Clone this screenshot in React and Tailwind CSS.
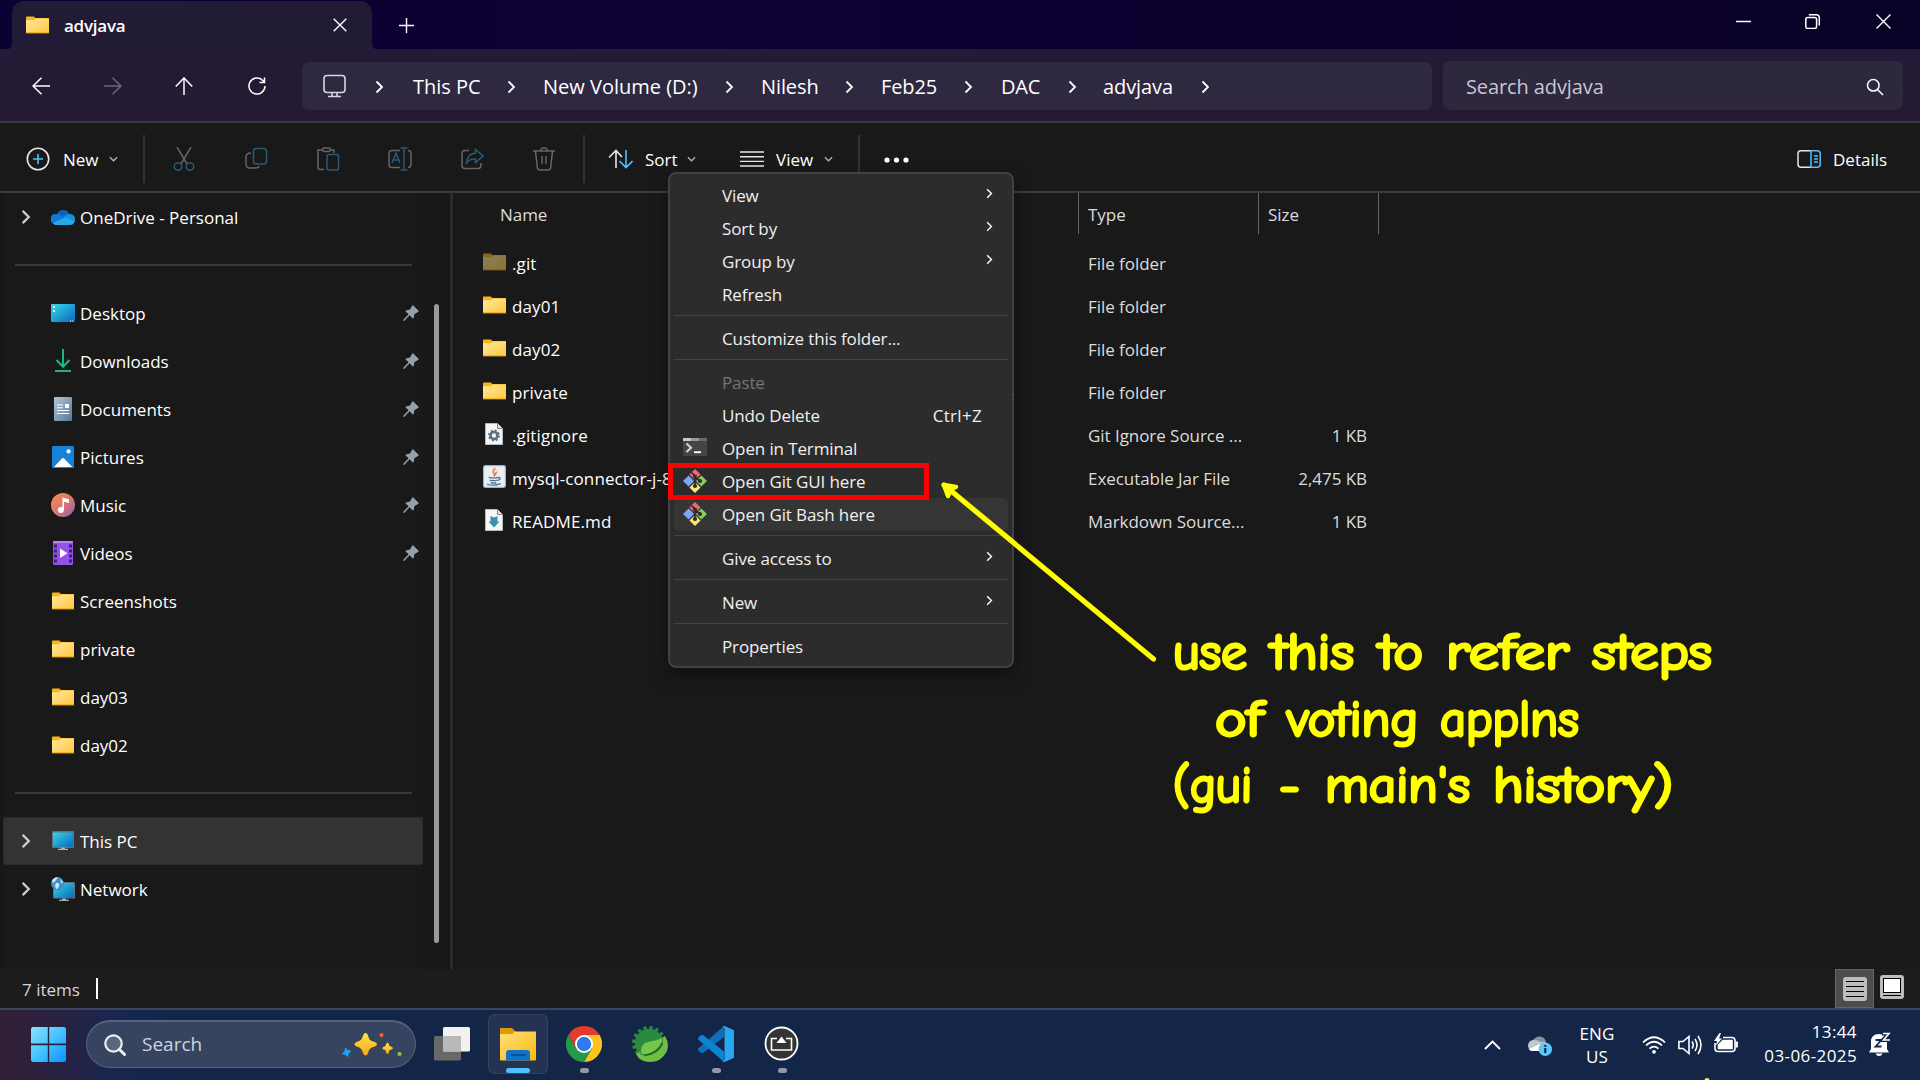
import React from "react";

/* ---------- small icons ---------- */

function Folder({ className = "w-[22px] h-[18px]", dim = false }) {
  return (
    <svg viewBox="0 0 22 18" className={className} opacity={dim ? 0.5 : 1} preserveAspectRatio="none">
      <defs>
        <linearGradient id="fold" x1="0" y1="0" x2="1" y2="1">
          <stop offset="0" stopColor="#ffe8a2" />
          <stop offset="1" stopColor="#ffc83c" />
        </linearGradient>
      </defs>
      <path d="M0 1.2Q0 .5.8.5H7.4L9 2H21.2Q22 2 22 2.8V6H0Z" fill="#f9b511" />
      <path d="M0 4.2H7.6L9.4 2.6H22V17H0Z" fill="url(#fold)" />
      <rect y="16.4" width="22" height="1" fill="#e6a417" />
    </svg>
  );
}

function Chevron({ className = "w-[9px] h-[14px]", color = "#fff", sw = 1.8 }) {
  return (
    <svg viewBox="0 0 9 14" className={className} fill="none" stroke={color} strokeWidth={sw}>
      <path d="M1.5 1.5L7 7L1.5 12.5" />
    </svg>
  );
}

function Down() {
  return (
    <svg viewBox="0 0 10 6" className="w-[9px] h-[6px]" fill="none" stroke="#b5b5b5" strokeWidth="1.4">
      <path d="M1 1L5 5L9 1" />
    </svg>
  );
}

function Pin() {
  return (
    <svg viewBox="0 0 16 16" className="w-4 h-4" fill="#98a1a8">
      <path d="M9.3.4Q9.8 0 10.3.5L15.5 5.7Q16 6.3 15.4 6.8L11.6 9L10.6 13Q10.2 13.8 9.5 13.2L6.6 10.3L1.6 15.4L0 16L.5 14.4L5.6 9.3L2.7 6.4Q2.2 5.8 3 5.4L7 4.4Z" />
    </svg>
  );
}

function OneDrive() {
  return (
    <svg viewBox="0 0 24 16" className="w-6 h-4">
      <path d="M6 5.2A6.6 6.6 0 0 1 18.3 5L14 10L5 6Z" fill="#0a64bc" />
      <path d="M5 5.2Q7.5 4.8 9.4 6L14.5 9L2 14.6A5 5 0 0 1 5 5.2Z" fill="#0f7bd8" />
      <path d="M18 5A5.3 5.3 0 0 1 23.4 13L13 8.3Q15 5 18 5Z" fill="#1490df" />
      <path d="M1.8 14.2L14 8.2L23.6 12.5Q22.6 16 19 16H5Q2.8 16 1.8 14.2Z" fill="#28a8ea" />
    </svg>
  );
}

function DesktopIcon() {
  return (
    <svg viewBox="0 0 24 18" className="w-6 h-[18px]">
      <defs>
        <linearGradient id="dsk" x1="0" y1="0" x2="1" y2="1">
          <stop offset="0" stopColor="#35d9e8" />
          <stop offset="1" stopColor="#0c66c0" />
        </linearGradient>
      </defs>
      <rect width="24" height="18" rx="1" fill="url(#dsk)" />
      <path d="M2 2h2v2h-2zM2 6h2v2h-2z" fill="#fff" />
      <path d="M19 16.6h1v1h-1zM21 16.6h1v1h-1z" fill="#fff" />
    </svg>
  );
}

function DownloadsIcon() {
  return (
    <svg viewBox="0 0 16 23" className="w-4 h-[23px]" fill="none" stroke="#1fb58c" strokeWidth="2">
      <path d="M8 0V17.5M1.5 11L8 17.8L14.5 11M0 22H16" />
    </svg>
  );
}

function DocumentsIcon() {
  return (
    <svg viewBox="0 0 18 24" className="w-[18px] h-6">
      <defs>
        <linearGradient id="doc" x1="0" y1="0" x2="1" y2="1">
          <stop offset="0" stopColor="#b4c6d8" />
          <stop offset="1" stopColor="#56789a" />
        </linearGradient>
      </defs>
      <rect width="18" height="24" rx="1" fill="url(#doc)" />
      <path d="M3 8h6M3 10.8h6M3 13.5h12M3 16.5h12" stroke="#fff" strokeWidth="1.1" />
      <rect x="11" y="7" width="4" height="4" fill="#fff" />
    </svg>
  );
}

function PicturesIcon() {
  return (
    <svg viewBox="0 0 22 22" className="w-[22px] h-[22px]">
      <rect width="22" height="22" rx="1.2" fill="#1683d8" />
      <path d="M2 21L9.6 12.8Q11 11.4 12.4 12.8L20.2 21Z" fill="#fff" />
      <circle cx="16.6" cy="5.4" r="2.1" fill="#fff" />
    </svg>
  );
}

function MusicIcon() {
  return (
    <svg viewBox="0 0 24 24" className="w-6 h-6">
      <defs>
        <linearGradient id="mus" x1="0" y1="0" x2="1" y2="1">
          <stop offset="0.15" stopColor="#f28a50" />
          <stop offset="0.6" stopColor="#d2707c" />
          <stop offset="1" stopColor="#8a5fb8" />
        </linearGradient>
      </defs>
      <circle cx="12" cy="12" r="12" fill="url(#mus)" />
      <circle cx="9.8" cy="17" r="3" fill="#fff" />
      <path d="M11.4 4.6L18 6.4V10L13 8.8V17H11.4Z" fill="#fff" />
    </svg>
  );
}

function VideosIcon() {
  return (
    <svg viewBox="0 0 20 24" className="w-5 h-6">
      <rect width="20" height="24" rx="1.2" fill="#9550e6" />
      <rect width="20" height="2" rx="1" fill="#b884f5" />
      <path d="M1 3.5h3v3h-3zM1 8.5h3v3h-3zM1 13.5h3v3h-3zM1 18.5h3v3h-3zM16 3.5h3v3h-3zM16 8.5h3v3h-3zM16 13.5h3v3h-3zM16 18.5h3v3h-3z" fill="#3f2072" />
      <path d="M7 7.5V17L14.5 12.3Z" fill="#fff" />
    </svg>
  );
}

function ThisPcIcon() {
  return (
    <svg viewBox="0 0 22 19" className="w-[22px] h-[19px]">
      <defs>
        <linearGradient id="tpc" x1="0" y1="0" x2="1" y2="1">
          <stop offset="0" stopColor="#35d9e8" />
          <stop offset="1" stopColor="#0c66c0" />
        </linearGradient>
      </defs>
      <rect width="22" height="17" rx="1" fill="#5b7482" />
      <rect x="1" y="1.5" width="20" height="14.3" fill="url(#tpc)" />
      <path d="M9 16.5h4v1.3h3V19H6V17.8h3Z" fill="#a8b2ba" />
    </svg>
  );
}

function NetworkIcon() {
  return (
    <svg viewBox="0 0 24 24" className="w-6 h-6">
      <defs>
        <linearGradient id="net" x1="0" y1="0" x2="1" y2="1">
          <stop offset="0" stopColor="#35d9e8" />
          <stop offset="1" stopColor="#0c66c0" />
        </linearGradient>
      </defs>
      <rect x="2" y="5" width="22" height="16.5" rx="1" fill="#5b7482" />
      <rect x="3" y="6" width="20" height="14.5" fill="url(#net)" />
      <path d="M11 21.5h4v1.3h3V24H8V22.8h3Z" fill="#a8b2ba" />
      <circle cx="6.5" cy="6.5" r="6.5" fill="#3f8fc4" />
      <path d="M1 4Q3 0 7 .4Q5 3 3.500 5Q2 7 1 4ZM5 6Q8 5 8.500 8Q7 12 5.500 12Q3 9 5 6ZM9 2L12 5L10.500 7Z" fill="#cfe8f5" />
    </svg>
  );
}

function PageIcon({ kind }) {
  return (
    <svg viewBox="0 0 18 22" className="w-[18px] h-[22px] ml-[2px]">
      <path d="M.5.5H12.500L17.500 5.500V21.500H.5Z" fill="#f6f6f6" stroke="#b9b9b9" />
      <path d="M12.500.5V5.500H17.500" fill="#dcdcdc" stroke="#8c8c8c" />
      {kind === "gear" ? (
        <>
          <circle cx="9" cy="12.500" r="3.500" fill="none" stroke="#5f717e" strokeWidth="2.600" />
          <circle cx="9" cy="12.500" r="5.200" fill="none" stroke="#5f717e" strokeWidth="1.600" strokeDasharray="2 2.080" />
        </>
      ) : (
        <path d="M5.500 7L9 8.500L12.500 7V12.500H14.500L9 18.500L3.500 12.500H5.500Z" fill="#3c8fae" />
      )}
    </svg>
  );
}

function JarIcon() {
  return (
    <svg viewBox="0 0 24 24" className="w-[23px] h-[23px]">
      <rect x=".6" y=".6" width="22.800" height="22.800" rx="2" fill="#e9eef2" stroke="#9fb3c2" strokeWidth="1.200" />
      <path d="M13 3.500Q9 6.500 11.500 9Q12.500 10.500 11.500 12M14.500 7Q12.500 8.500 13.500 10.500" stroke="#e8782c" strokeWidth="1.500" fill="none" />
      <path d="M6 13Q11 14.500 16 13M7 15.800Q11 17 15 15.800M8 18.300Q11 19.300 14 18.300M16 13Q19 13 17.500 15L15.500 16.300M4 19.800Q11 22.500 18.500 19.500" stroke="#4a7493" strokeWidth="1.300" fill="none" />
    </svg>
  );
}

function GitIcon() {
  return (
    <svg viewBox="0 0 24 24" className="w-6 h-6">
      <path d="M12 0L17.600 5.600L12 11L6.400 5.600Z" fill="#f0696c" />
      <path d="M18.400 6.400L24 12L18.400 17.600L13 12Z" fill="#84cf5e" />
      <path d="M12 13L17.600 18.400L12 24L6.400 18.400Z" fill="#fbe27b" />
      <path d="M5.600 6.400L11 12L5.600 17.600L0 12Z" fill="#79a9f5" />
      <path d="M8.500 3.500L12 7V17M12 8L17 12" stroke="#2c2c2c" strokeWidth="1.700" fill="none" />
      <circle cx="12" cy="7.500" r="2" fill="#2c2c2c" />
      <circle cx="17" cy="12" r="2.100" fill="#2c2c2c" />
      <circle cx="12" cy="17" r="2.100" fill="#2c2c2c" />
    </svg>
  );
}

function TerminalIcon() {
  return (
    <svg viewBox="0 0 24 18" className="w-6 h-[18px] mb-0.5">
      <rect width="24" height="18" rx="1" fill="#454545" />
      <path d="M0 0h8v3h-8z" fill="#c8c8c8" />
      <path d="M8 0h8v3h-8z" fill="#9a9a9a" />
      <path d="M16 0h8v3h-8z" fill="#6a6a6a" />
      <path d="M3.500 5.500L8 9.700L3.500 14" stroke="#d0d0d0" strokeWidth="2.200" fill="none" />
      <path d="M11 14.200H18" stroke="#fff" strokeWidth="1.800" />
    </svg>
  );
}

/* ---------- title and navigation ---------- */

function TitleBar() {
  return (
    <div className="flex h-[49px] shrink-0 items-end bg-linear-to-r from-[#0c0133] via-[#0e0032] to-[#0a0226]">
      <svg viewBox="0 0 12 12" className="h-[5px] w-[5px] ml-[7px] text-[#221b36]">
        <path d="M12 0V12H0Q12 12 12 0Z" fill="currentColor" />
      </svg>
      <div className="flex h-12 w-[360px] items-center rounded-t-[12px] bg-[#221b36] pl-[14px] pr-[25px]">
        <Folder className="w-[23px] h-[18px]" />
        <span className="ml-[15px] pt-px text-[17px] font-semibold tracking-[-0.25px] text-white">advjava</span>
        <svg viewBox="0 0 14 14" className="ml-auto mb-px h-[14px] w-[14px]" stroke="#fff" strokeWidth="1.400">
          <path d="M.7.7L13.300 13.300M13.300.7L.7 13.300" />
        </svg>
      </div>
      <svg viewBox="0 0 12 12" className="h-[5px] w-[5px] text-[#221b36]">
        <path d="M0 0V12H12Q0 12 0 0Z" fill="currentColor" />
      </svg>
      <svg viewBox="0 0 15 15" className="mb-[16px] ml-[22px] h-[15px] w-[15px]" stroke="#fff" strokeWidth="1.400">
        <path d="M7.500 0V15M0 7.500H15" />
      </svg>
      <div className="mb-[20px] ml-auto mr-[29px] flex items-center gap-[55px]">
        <svg viewBox="0 0 15 15" className="h-[15px] w-[15px]" stroke="#fff" strokeWidth="1.500">
          <path d="M0 7.500H15" />
        </svg>
        <svg viewBox="0 0 15 15" className="mr-px -ml-px h-[15px] w-[15px]" fill="none" stroke="#fff" strokeWidth="1.500">
          <rect x=".8" y="3.600" width="10.800" height="10.800" rx="2" />
          <path d="M3.800.8H11Q14.300.8 14.300 4V11.500" />
        </svg>
        <svg viewBox="0 0 15 15" className="h-[15px] w-[15px]" stroke="#fff" strokeWidth="1.400">
          <path d="M.5.5L14.500 14.500M14.500.5L.5 14.500" />
        </svg>
      </div>
    </div>
  );
}

function Crumb({ children, className }) {
  return (
    <>
      <Chevron className="h-[14px] w-[9px] shrink-0 mt-0.5" />
      <span className={"shrink-0 whitespace-nowrap pt-0.5 " + className}>{children}</span>
    </>
  );
}

function NavBar() {
  return (
    <div className="flex h-[74px] shrink-0 items-start border-b-2 border-[#3b3b3d] bg-linear-to-b from-[#221b36] to-[#241a32] pr-[17px]">
      <div className="flex w-[302px] items-center gap-[54px] pl-[32px] pt-[28px]">
        <svg viewBox="0 0 18 18" className="h-[18px] w-[18px]" fill="none" stroke="#fff" strokeWidth="1.500">
          <path d="M18 9H1M9.500.7L1 9L9.500 17.300" />
        </svg>
        <svg viewBox="0 0 18 18" className="h-[18px] w-[18px]" fill="none" stroke="#6d6779" strokeWidth="1.500">
          <path d="M0 9H17M8.500.7L17 9L8.500 17.300" />
        </svg>
        <svg viewBox="0 0 18 18" className="-ml-px mr-px h-[18px] w-[18px]" fill="none" stroke="#fff" strokeWidth="1.500">
          <path d="M9 18V1M.7 9.500L9 1L17.300 9.500" />
        </svg>
        <svg viewBox="0 0 18 18" className="h-[18px] w-[18px]" fill="none" stroke="#fff" strokeWidth="1.500">
          <path d="M17 9A8 8 0 1 1 14.500 3.200L16.500 5.200M16.500.5V5.500H11.500" />
        </svg>
      </div>
      <div className="mt-[13px] flex h-12 w-[1130px] items-center rounded-[7px] bg-[#2e2841] pl-[21px] text-[20px] text-white">
        <svg viewBox="0 0 23 24" className="mr-[29px] h-[24px] w-[23px] shrink-0" fill="none" stroke="#d8d6de" strokeWidth="1.600">
          <rect x="1" y="1.500" width="21" height="17" rx="3" />
          <path d="M9 18.500V22M14 18.500V22M5 22.500H18" />
        </svg>
        <Crumb className="ml-[29px] mr-[27px] w-[67px] tracking-[0px]">This PC</Crumb>
        <Crumb className="ml-[27px] mr-[26px] w-[156px] tracking-[0px]">New Volume (D:)</Crumb>
        <Crumb className="ml-[27px] mr-[27px] w-[57px] tracking-[-0.1px]">Nilesh</Crumb>
        <Crumb className="ml-[27px] mr-[27px] w-[56px] tracking-[-0.1px]">Feb25</Crumb>
        <Crumb className="ml-[28px] mr-[26px] w-[41px] tracking-[-0.2px]">DAC</Crumb>
        <Crumb className="ml-[26px] mr-[28px] w-[70px] tracking-[-0.1px]">advjava</Crumb>
        <Chevron className="h-[14px] w-[9px] mt-0.5" />
      </div>
      <div className="ml-[11px] mt-[12px] flex h-[49px] flex-1 items-center justify-between rounded-[7px] bg-[#2e283f] pl-[23px] pr-[19px]">
        <span className="pt-0.5 text-[20px] tracking-[-0.1px] text-[#c9c6cf]">Search advjava</span>
        <svg viewBox="0 0 18 18" className="mt-0.5 h-[18px] w-[18px]" fill="none" stroke="#fff" strokeWidth="1.500">
          <circle cx="7.300" cy="7.300" r="5.800" />
          <path d="M11.500 11.500L17 17" />
        </svg>
      </div>
    </div>
  );
}

/* ---------- command bar ---------- */

function CommandBar() {
  const g = "#666";
  const b = "#2b5a75";
  return (
    <div className="flex h-[70px] shrink-0 items-center border-b-2 border-[#3b3b3b] bg-[#191919] pt-1 text-[17px] text-white">
      <div className="flex w-[143px] items-center pl-[26px]">
        <svg viewBox="0 0 24 24" className="h-6 w-6 mb-px" fill="none" stroke="#e6e6e6" strokeWidth="1.600">
          <circle cx="12" cy="12" r="10.700" />
          <path d="M12 7V17M7 12H17" stroke="#4cc2ff" />
        </svg>
        <span className="ml-[13px] mr-[9px] w-[37px] pt-px">New</span>
        <Down />
      </div>
      <div className="h-12 w-[2px] bg-[#333]" />
      <div className="flex w-[438px] items-center gap-12 pl-[27px]">
        <svg viewBox="0 0 24 24" className="h-6 w-6 shrink-0" fill="none" strokeWidth="1.500">
          <path d="M5 0L15 17M19 0L9 17" stroke={g} />
          <circle cx="6" cy="19.500" r="3.800" stroke={b} />
          <circle cx="18" cy="19.500" r="3.800" stroke={b} />
        </svg>
        <svg viewBox="0 0 24 24" className="h-6 w-6 shrink-0" fill="none" strokeWidth="1.500">
          <path d="M7 6Q2 6 2 10V17Q2 21 6 21H11Q15 21 15 19" stroke={g} />
          <rect x="9.500" y="1.500" width="13" height="15.500" rx="3" stroke={b} />
        </svg>
        <svg viewBox="0 0 24 24" className="h-6 w-6 shrink-0" fill="none" strokeWidth="1.500">
          <path d="M7 3H2V20Q2 22.500 4.500 22.500H8M14 3H18V6" stroke={g} />
          <rect x="6.500" y="1" width="8" height="3.500" rx="1.700" stroke={g} />
          <rect x="11" y="7.500" width="11.500" height="15.500" rx="2" stroke={b} />
        </svg>
        <svg viewBox="0 0 24 24" className="h-6 w-6 shrink-0" fill="none" strokeWidth="1.500">
          <path d="M12 3.500H4Q1 3.500 1 6.500V17.500Q1 20.500 4 20.500H12M20 3.500Q23 3.500 23 6.500V17.500Q23 20.500 20 20.500" stroke={g} />
          <path d="M16 1V23M12.500 1H19.500M12.500 23H19.500M4 16L8 6L12 16M5.500 13H10.500" stroke={b} />
        </svg>
        <svg viewBox="0 0 24 24" className="h-6 w-6 shrink-0" fill="none" strokeWidth="1.500">
          <path d="M9 3.500H5Q2 3.500 2 6.500V18.500Q2 21.500 5 21.500H18Q21 21.500 21 18V16" stroke={g} />
          <path d="M15.500 2.500L23 9L15.500 15.500V12Q10 11.500 6.500 16Q7 7 15.500 6Z" stroke={b} />
        </svg>
        <svg viewBox="0 0 24 24" className="h-6 w-6 shrink-0" fill="none" stroke={g} strokeWidth="1.500">
          <path d="M1 4H23M8.500 4Q8.500 1 12 1Q15.500 1 15.500 4M3.500 4L5.300 20.500Q5.500 23 8 23H16Q18.500 23 18.700 20.500L20.500 4M10 9V17M14 9V17" />
        </svg>
      </div>
      <div className="h-12 w-[2px] bg-[#333]" />
      <div className="flex w-[273px] items-center pl-[23px]">
        <svg viewBox="0 0 25 20" className="h-[20px] w-[25px]" fill="none" strokeWidth="1.600">
          <path d="M8 19V1.500M1 8.500L8 1.500L14 8" stroke="#e6e6e6" />
          <path d="M18 1V18.500M11.500 12L18 18.500L24.500 12" stroke="#4cc2ff" />
        </svg>
        <span className="ml-[12px] mr-[8px] w-[34px] pt-px">Sort</span>
        <Down />
        <svg viewBox="0 0 24 16" className="ml-[44px] mb-px h-[16px] w-6" stroke="#e6e6e6" strokeWidth="1.400">
          <path d="M0 1H24M0 5.700H24M0 10.400H24M0 15H24" />
        </svg>
        <span className="ml-[12px] mr-[9px] w-[39px] pt-px">View</span>
        <Down />
      </div>
      <div className="h-12 w-[2px] bg-[#333]" />
      <svg viewBox="0 0 25 6" className="ml-[24px] mt-0.5 h-[6px] w-[25px]" fill="#fff">
        <circle cx="3" cy="3" r="2.600" />
        <circle cx="12.500" cy="3" r="2.600" />
        <circle cx="22" cy="3" r="2.600" />
      </svg>
      <div className="ml-auto flex items-center pr-[32px]">
        <svg viewBox="0 0 24 18" className="h-[18px] w-6" fill="none" strokeWidth="1.500">
          <path d="M14 .8H4Q1 .8 1 3.800V14.200Q1 17.200 4 17.200H14" stroke="#e6e6e6" />
          <path d="M14 .8H20Q23.200.8 23.200 3.800V14.200Q23.200 17.200 20 17.200H14ZM17 6H21M17 9H21M17 12H21" stroke="#4cc2ff" />
        </svg>
        <span className="ml-[12px] w-[55px] pt-px">Details</span>
      </div>
    </div>
  );
}

/* ---------- sidebar ---------- */

const QUICK = [
  ["Desktop", <DesktopIcon />, true],
  ["Downloads", <DownloadsIcon />, true],
  ["Documents", <DocumentsIcon />, true],
  ["Pictures", <PicturesIcon />, true],
  ["Music", <MusicIcon />, true],
  ["Videos", <VideosIcon />, true],
  ["Screenshots", <Folder />, false],
  ["private", <Folder />, false],
  ["day03", <Folder />, false],
  ["day02", <Folder />, false],
];

function SideRow({ label, icon, pin, expand, active }) {
  return (
    <div className={"flex h-12 items-center pl-[18px] pr-1 " + (active ? "rounded-[3px] bg-[#333] shadow-[inset_0_0_0_1px_#2b2b2b]" : "")}>
      <div className="w-[30px]">{expand && <Chevron className="h-[16px] w-[10px]" color="#cfcfcf" sw={2} />}</div>
      <div className="mb-px flex w-6 justify-center">{icon}</div>
      <span className="ml-[5px] pt-px text-[17px] text-white">{label}</span>
      {pin && <div className="ml-auto"><Pin /></div>}
    </div>
  );
}

function Sidebar() {
  return (
    <div className="flex w-[450px] bg-[#171717]">
      <div className="ml-[3px] w-[420px] bg-[#191919]">
        <SideRow label="OneDrive - Personal" icon={<OneDrive />} expand />
        <div className="ml-3 mr-[11px] mt-[23px] h-[2px] bg-[#393939]" />
        <div className="mt-[23px]">
          {QUICK.map(([label, icon, pin]) => (
            <SideRow key={label} label={label} icon={icon} pin={pin} />
          ))}
        </div>
        <div className="ml-3 mr-[11px] mt-[23px] h-[2px] bg-[#393939]" />
        <div className="mt-[23px]">
          <SideRow label="This PC" icon={<ThisPcIcon />} expand active />
          <SideRow label="Network" icon={<NetworkIcon />} expand />
        </div>
      </div>
      <div className="ml-[11px] mt-[111px] h-[639px] w-[5px] rounded-full bg-[#999]" />
    </div>
  );
}

/* ---------- file list ---------- */

const FILES = [
  [".git", <Folder className="w-[23px] h-[18px]" dim />, "File folder", ""],
  ["day01", <Folder className="w-[23px] h-[18px]" />, "File folder", ""],
  ["day02", <Folder className="w-[23px] h-[18px]" />, "File folder", ""],
  ["private", <Folder className="w-[23px] h-[18px]" />, "File folder", ""],
  [".gitignore", <PageIcon kind="gear" />, "Git Ignore Source ...", "1 KB"],
  ["mysql-connector-j-8", <JarIcon />, "Executable Jar File", "2,475 KB"],
  ["README.md", <PageIcon kind="down" />, "Markdown Source...", "1 KB"],
];

function FileList() {
  return (
    <div className="flex-1 border-l-[3px] border-[#2b2b2b] bg-[#191919] text-[17px] tracking-[-0.05px] text-[#dcdcdc]">
      <div className="mb-[8px] flex h-[41px] items-center">
        <span className="w-[625px] pl-[47px] pt-0.5">Name</span>
        <div className="flex h-full w-[180px] items-center border-l border-[#666] pl-[9px] pt-0.5">Type</div>
        <div className="flex h-full w-[121px] items-center border-x border-[#666] pl-[9px] pt-0.5">Size</div>
      </div>
      {FILES.map(([name, icon, type, size]) => (
        <div key={name} className="flex h-[43px] items-center">
          <div className="mb-1 ml-[30px] w-[29px]">{icon}</div>
          <span className="w-[576px] tracking-[0.12px] text-white">{name}</span>
          <span className="w-[170px]">{type}</span>
          <span className="w-[109px] text-right">{size}</span>
        </div>
      ))}
    </div>
  );
}

/* ---------- context menu ---------- */

function MenuItem({ label, icon, arrow, hint, muted, hover }) {
  return (
    <div className={"flex h-[33px] items-center rounded-[5px] pl-[9px] pr-[15px] " + (hover ? "bg-[#353535] " : "") + (muted ? "text-[#757575]" : "text-[#f0f0f0]")}>
      <div className="mb-0.5 w-[39px]">{icon}</div>
      <span className="pt-px">{label}</span>
      {hint && <span className="ml-auto mr-[11px] pt-px tracking-[0.3px]">{hint}</span>}
      {arrow && <Chevron className="mb-1 ml-auto h-[11px] w-[7px]" />}
    </div>
  );
}

function MenuLine() {
  return <div className="mb-[6px] mt-[4px] h-px bg-[#434343]" />;
}

function ContextMenu() {
  return (
    <div className="absolute left-[668px] top-[172px] h-[496px] w-[346px] rounded-[8px] border-2 border-[#414141] bg-[#2c2c2c] px-1 pt-[5px] text-[17px] tracking-[-0.12px] shadow-[0_8px_16px_rgba(0,0,0,0.35)]">
      <MenuItem label="View" arrow />
      <MenuItem label="Sort by" arrow />
      <MenuItem label="Group by" arrow />
      <MenuItem label="Refresh" />
      <MenuLine />
      <MenuItem label="Customize this folder..." />
      <MenuLine />
      <MenuItem label="Paste" muted />
      <MenuItem label="Undo Delete" hint="Ctrl+Z" />
      <MenuItem label="Open in Terminal" icon={<TerminalIcon />} />
      <MenuItem label="Open Git GUI here" icon={<GitIcon />} />
      <MenuItem label="Open Git Bash here" icon={<GitIcon />} hover />
      <MenuLine />
      <MenuItem label="Give access to" arrow />
      <MenuLine />
      <MenuItem label="New" arrow />
      <MenuLine />
      <MenuItem label="Properties" />
    </div>
  );
}

/* ---------- annotation drawn over the screen ---------- */

const NOTES = [
  ["use", 1173, 670, 74],
  ["this", 1271, 670, 83],
  ["to", 1379, 670, 44],
  ["refer", 1446, 670, 123],
  ["steps", 1592, 670, 120],
  ["of", 1215, 737, 48],
  ["voting", 1287, 737, 131],
  ["applns", 1440, 737, 139],
  ["(gui", 1173, 803, 79],
  ["-", 1279, 803, 21],
  ["main's", 1325, 803, 145],
  ["history)", 1493, 803, 180],
];

function Annotation() {
  return (
    <>
      <div className="absolute left-[668px] top-[463px] h-[37px] w-[261px] border-[5px] border-[#ff0000]" />
      <svg viewBox="0 0 1920 1080" className="pointer-events-none absolute left-0 top-0 h-[1080px] w-[1920px]">
        <g stroke="#ffff00" strokeLinecap="round" strokeLinejoin="round" fill="#ffff00">
          <path d="M1153.500 659L944 485" strokeWidth="5.200" />
          <path d="M944 485L956 487L951 489L948 496Z" strokeWidth="4.500" />
          <g fontFamily="'Comic Sans MS', 'Comic Neue', Lato, sans-serif" fontSize="51" strokeWidth="2.900" className="[font-variant-ligatures:none]">
            {NOTES.map(([t, x, y, w]) => (
              <text key={t} x={x} y={y - 1} textLength={w} lengthAdjust="spacingAndGlyphs">{t}</text>
            ))}
          </g>
        </g>
        <circle cx="1707" cy="1080.500" r="2.500" fill="#ffff00" />
        <path d="M1013 394h1v2h-1z" fill="#c0392b" />
        <path d="M1013 477h1v4h-1z" fill="#a01818" />
      </svg>
    </>
  );
}

/* ---------- status bar and taskbar ---------- */

function StatusBar() {
  return (
    <div className="flex h-[39px] shrink-0 items-center bg-[#1c1c1c] pl-[22px] pr-[16px]">
      <span className="w-[74px] pt-0.5 text-[17px] text-[#d6d6d6]">7 items</span>
      <div className="h-[21px] w-[2px] bg-white" />
      <div className="ml-auto flex h-[39px] w-[39px] items-center justify-center border border-[#666] bg-[#4d4d4d]">
        <svg viewBox="0 0 24 24" className="h-6 w-6">
          <rect width="24" height="24" rx="3" fill="#bdbbbd" />
          <path d="M3 4.500H21M3 9.500H21M3 14.500H21M3 19.500H21" stroke="#000" />
        </svg>
      </div>
      <svg viewBox="0 0 24 24" className="mb-1 ml-[6px] h-6 w-6">
        <rect width="24" height="24" rx="3" fill="#bdbbbd" />
        <rect x="3.500" y="3.500" width="17" height="14" fill="#fff" stroke="#000" />
        <path d="M3 20.500H21" stroke="#000" />
      </svg>
    </div>
  );
}

function TaskApp({ children, active, mark }) {
  return (
    <div className={"flex h-[60px] w-[60px] flex-col items-center rounded-[7px] pt-[12px] " + (active ? "bg-[#243352] shadow-[inset_0_0_0_1px_#34425f]" : "")}>
      <div className="h-9 w-9">{children}</div>
      {mark && <div className={"mt-[6px] h-[5px] rounded-full " + (active ? "w-6 bg-[#4cc2ff]" : "w-[9px] bg-[#9398a8]")} />}
    </div>
  );
}

function Taskbar() {
  return (
    <div className="flex h-[72px] shrink-0 items-start border-t-2 border-[#3b465e] bg-[linear-gradient(90deg,#331f36_0px,#2a2140_50px,#162750_125px,#142648_170px,#142648_100%)] text-white">
      <svg viewBox="0 0 35 35" className="ml-[31px] mt-[17px] h-[35px] w-[35px]">
        <defs>
          <linearGradient id="win" x1="0" y1="0" x2="35" y2="35" gradientUnits="userSpaceOnUse">
            <stop offset="0" stopColor="#8fe0ff" />
            <stop offset="0.500" stopColor="#45c3ff" />
            <stop offset="1" stopColor="#0a93ff" />
          </linearGradient>
        </defs>
        <path d="M1.500 0H16.800V16.600H0V1.500ZM18.200 0H33.500L35 1.500V16.600H18.200ZM0 18.200H16.800V35H1.500L0 33.500ZM18.200 18.200H35V33.500L33.500 35H18.200Z" fill="url(#win)" />
      </svg>
      <div className="ml-5 mt-[10px] flex h-12 w-[330px] items-center rounded-full border border-t-2 border-[#55607c] bg-[#37445f] pl-[17px] pr-[13px]">
        <svg viewBox="0 0 22 22" className="h-[22px] w-[22px]" fill="#5a6580" stroke="#eceef2" strokeWidth="2.200">
          <circle cx="9.500" cy="9.500" r="8.200" />
          <path d="M15.300 15.300L20.500 20.500" strokeWidth="3" strokeLinecap="round" />
        </svg>
        <span className="ml-[16px] text-[19px] text-[#cfd3dc]">Search</span>
        <svg viewBox="0 0 60 24" className="ml-auto h-6 w-[60px]">
          <defs>
            <linearGradient id="spk" x1="0" y1="0" x2="0" y2="1">
              <stop offset="0" stopColor="#ffe24a" />
              <stop offset="1" stopColor="#f9a61c" />
            </linearGradient>
          </defs>
          <path d="M23.500 0Q25.500 0 26.500 4Q27.300 7.500 31 8.500Q35 9.500 35 11.200Q35 13 31 14Q27.500 15 26.500 18.500Q25.500 22.500 23.500 22.500Q21.700 22.500 20.500 18.500Q19.500 15 16 14Q12.500 13 12.500 11.200Q12.500 9.500 16 8.500Q19.500 7.500 20.500 4Q21.700 0 23.500 0Z" fill="url(#spk)" />
          <path d="M45.500 9.500Q46.700 9.500 47.500 13Q51 14 51 15.200Q51 16.300 47.500 17.200Q46.700 21 45.500 21Q44.300 21 43.500 17.200Q40.200 16.300 40.200 15.200Q40.200 14 43.500 13Q44.300 9.500 45.500 9.500Z" fill="url(#spk)" />
          <path d="M3.500 15L5.500 17.500L8.500 18L6.500 20.500L5.500 23.500L3.500 21.500L.5 20.500L3 18.500Z" fill="#18a6ee" stroke="#18a6ee" />
          <circle cx="39.500" cy="2.100" r="2.100" fill="#f0622d" />
          <circle cx="57.500" cy="21" r="2.100" fill="#8cc63e" />
        </svg>
      </div>
      <div className="ml-[6px] mt-1 flex gap-[6px]">
        <TaskApp>
          <svg viewBox="0 0 36 36" className="h-9 w-9">
            <rect y="10" width="27" height="24.500" rx="1.500" fill="#686868" />
            <rect x="9" y="1" width="27" height="24.500" rx="1.500" fill="#f2f2f2" />
            <path d="M9 10H27V25.500H9Z" fill="#b9b9b9" />
          </svg>
        </TaskApp>
        <TaskApp active mark>
          <svg viewBox="0 0 36 36" className="h-9 w-9">
            <defs>
              <linearGradient id="bigf" x1="0" y1="0" x2="1" y2="1">
                <stop offset="0" stopColor="#ffdf7c" />
                <stop offset="1" stopColor="#fdb90d" />
              </linearGradient>
            </defs>
            <path d="M0 3Q0 2 1 2H12L15.500 5.500V10H0Z" fill="#dc9a05" />
            <path d="M0 8H12L15 5.500H36V33.500Q36 34.500 35 34.500H1Q0 34.500 0 33.500Z" fill="url(#bigf)" />
            <path d="M6 34.500V27Q6 24 9 24H27Q30 24 30 27V34.500Z" fill="#0d74c8" />
            <path d="M10.500 29H25.500" stroke="#0a4d90" strokeWidth="1.800" />
          </svg>
        </TaskApp>
        <TaskApp mark>
          <svg viewBox="0 0 36 36" className="h-9 w-9">
            <path d="M18 18L2.400 9A18 18 0 0 1 33.600 9Z" fill="#e33b2e" />
            <path d="M18 9H33.600A18 18 0 0 1 18 36L25.800 22.500Z" fill="#fcc31e" />
            <path d="M2.400 9A18 18 0 0 0 18 36L25.800 22.500L10.200 22.500Z" fill="#249a48" />
            <path d="M2.400 9H33.600H18L10.200 22.500Z" fill="#e33b2e" />
            <circle cx="18" cy="18" r="9" fill="#fff" />
            <circle cx="18" cy="18" r="7.200" fill="#2f7bee" />
          </svg>
        </TaskApp>
        <TaskApp>
          <svg viewBox="0 0 36 36" className="h-9 w-9">
            <circle cx="17" cy="17" r="14.300" fill="#2c8a3e" />
            <circle cx="17" cy="17" r="15.500" fill="none" stroke="#2c8a3e" strokeWidth="3" strokeDasharray="3.200 2.890" />
            <path d="M33 10Q38 18 34.500 26Q29 36 18 36Q8 36 4 28L9 25Q9 17 19 14.500Q29 13 33 10Z" fill="#6fbf44" />
            <path d="M9 28.500Q6.500 17 18 15Q27 14 30 11Q32 20 25.500 25Q18 30 9 28.500Z" fill="#78c649" stroke="#2c8a3e" strokeWidth="1" />
            <path d="M12 29.500Q25 28 30.500 17" stroke="#17692d" strokeWidth="1.700" fill="none" />
          </svg>
        </TaskApp>
        <TaskApp mark>
          <svg viewBox="0 0 36 36" className="h-9 w-9">
            <path d="M26 0V11L5 27Q3.500 27.500 2.500 26.500L.5 24.500Q-.5 23.300.5 22.300Z" fill="#0b70b8" />
            <path d="M26 36V25.500L5 9Q3.500 8.500 2.500 9.500L.5 11.500Q-.5 12.700.5 13.700Z" fill="#0a84d2" />
            <path d="M26 0L36 4.500V31.500L26 36Q25 36 24.500 35.500L27 34V2L24.500.5Q25 0 26 0Z" fill="#28a7f0" />
            <path d="M26.500 0L36 4.500V31.500L26.500 36Z" fill="#28a7f0" />
          </svg>
        </TaskApp>
        <TaskApp mark>
          <svg viewBox="0 0 36 36" className="h-9 w-9">
            <circle cx="17.500" cy="17.500" r="16" fill="#343434" stroke="#fff" strokeWidth="1.800" />
            <path d="M13 12.500H7.500V24H27.500V12.500H22" fill="none" stroke="#fff" strokeWidth="1.600" />
            <path d="M17.500 10.500L22.500 17H12.500Z" fill="#fff" />
          </svg>
        </TaskApp>
      </div>
      <div className="ml-auto flex h-[70px] items-center pr-[29px]">
        <svg viewBox="0 0 17 10" className="mb-px h-[10px] w-[17px]" fill="none" stroke="#fff" strokeWidth="1.900">
          <path d="M1 9L8.500 1.500L16 9" />
        </svg>
        <svg viewBox="0 0 24 20" className="ml-[27px] mt-px h-5 w-6">
          <path d="M5 4Q9-1 14 1Q17 2 18 6L10 9Z" fill="#8a909c" />
          <path d="M0 9Q1 4 6 4Q10 4 12 6L18 6V15H4Q0 14 0 9Z" fill="#c3c7ce" />
          <path d="M1 13L12 8L14 15H4Q2 15 1 13Z" fill="#fff" />
          <circle cx="17.300" cy="13.200" r="6.700" fill="#5cc8fa" />
          <path d="M17.300 9V10.800M17.300 12V17" stroke="#0c1c30" strokeWidth="2" />
        </svg>
        <div className="ml-[26px] w-[38px] text-center text-[17px] leading-[23px] tracking-[0.200px]">
          ENG
          <br />
          US
        </div>
        <svg viewBox="0 0 24 18" className="ml-[26px] h-[18px] w-6" fill="none" stroke="#fff" strokeWidth="1.700">
          <path d="M1 6.500Q12-4 23 6.500M4 9.500Q12 2 20 9.500M7.500 12.700Q12 8.500 16.500 12.700" />
          <circle cx="12" cy="15.800" r="1.900" fill="#fff" stroke="none" />
        </svg>
        <svg viewBox="0 0 24 20" className="ml-3 h-5 w-6" fill="none" stroke="#fff" strokeWidth="1.600">
          <path d="M.9 6.500H5L11 1.500V18.500L5 13.500H.9ZM14 6.500Q16.500 10 14 13.500M17 4Q21 10 17 16M20 1Q26 10 20 19" />
        </svg>
        <svg viewBox="0 0 24 20" className="mb-1 ml-3 h-5 w-6" fill="none" stroke="#fff" strokeWidth="1.600">
          <path d="M9 4.500H18Q21 4.500 21 7.500V15.500Q21 18.500 18 18.500H4Q1 18.500 1 15.500V10" />
          <path d="M9 7.500H18V15.500H4.500V12Z" fill="#fff" />
          <path d="M5.500 0L0 8H3L2 12.500L8 5.500H5L7 0Z" fill="#fff" stroke="none" />
          <path d="M22.700 8.500V14.500" strokeWidth="2.400" />
        </svg>
        <div className="w-[119px] pb-0.5 text-right text-[17px] leading-6 tracking-[0.4px]">
          13:44
          <br />
          03-06-2025
        </div>
        <svg viewBox="0 0 22 24" className="ml-[12px] mb-0.5 h-6 w-[22px]">
          <path d="M2 17V10Q2 2 10 2Q18 2 18 10V17L20 20.500H0Z" fill="#fff" />
          <path d="M6.500 21.500H13.500Q12.500 24 10 24Q7.500 24 6.500 21.500Z" fill="#fff" />
          <path d="M6.500 8H12.500L6.500 14.500H12.500" stroke="#142648" strokeWidth="1.800" fill="none" />
          <path d="M13 1.500H20L14 8H21" stroke="#142648" strokeWidth="4" fill="none" />
          <path d="M14 1.500H20L14.500 8H21" stroke="#fff" strokeWidth="1.600" fill="none" />
        </svg>
      </div>
    </div>
  );
}

export default function App() {
  return (
    <div className="relative flex h-[1080px] w-[1920px] flex-col overflow-hidden bg-[#191919] font-['Segoe_UI','Open_Sans',sans-serif]">
      <TitleBar />
      <NavBar />
      <CommandBar />
      <div className="flex min-h-0 flex-1">
        <Sidebar />
        <FileList />
      </div>
      <StatusBar />
      <Taskbar />
      <ContextMenu />
      <Annotation />
    </div>
  );
}
